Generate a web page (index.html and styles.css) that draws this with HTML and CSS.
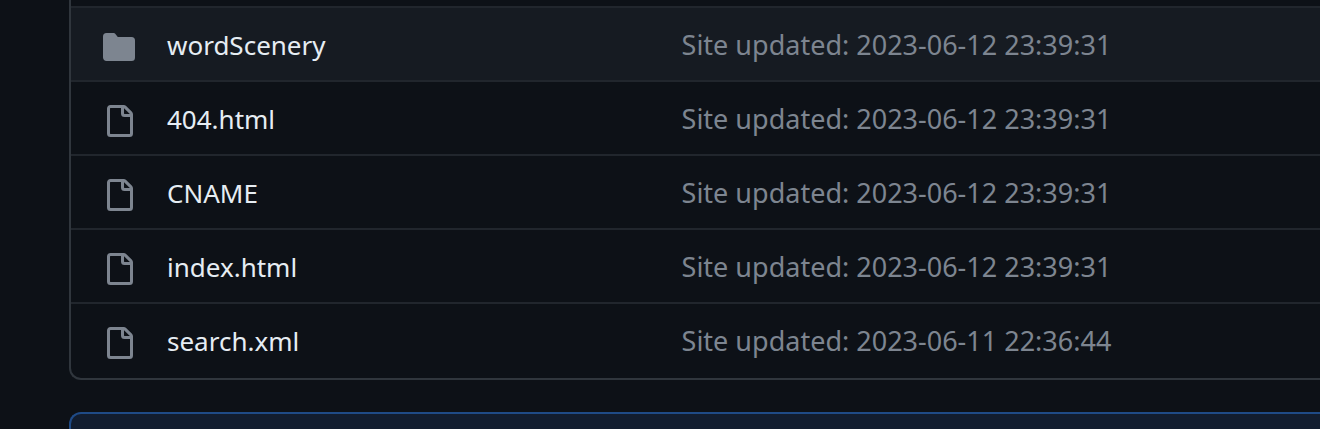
FILE: index.html
```html
<!DOCTYPE html>
<html lang="en">
<head>
  <meta charset="UTF-8" />
  <meta name="viewport" content="width=device-width, initial-scale=1" />
  <title>Files</title>
  <link rel="stylesheet" href="styles.css">
</head>
<body>

  <!-- Icons shared by the file rows -->
  <svg class="icon-defs" aria-hidden="true">
    <symbol id="icon-folder" viewBox="0 0 16 16">
      <path d="M1.75 1A1.75 1.75 0 0 0 0 2.75v10.5C0 14.216.784 15 1.75 15h12.5A1.75 1.75 0 0 0 16 13.25v-8.5A1.75 1.75 0 0 0 14.25 3H7.5a.25.25 0 0 1-.2-.1l-.9-1.2C6.07 1.26 5.55 1 5 1H1.75Z"/>
    </symbol>
    <symbol id="icon-file" viewBox="0 0 16 16">
      <path d="M2 1.75C2 .784 2.784 0 3.75 0h6.586c.464 0 .909.184 1.237.513l2.914 2.914c.329.328.513.773.513 1.237v9.586A1.75 1.75 0 0 1 13.25 16h-9.5A1.75 1.75 0 0 1 2 14.25Zm1.75-.25a.25.25 0 0 0-.25.25v12.5c0 .138.112.25.25.25h9.5a.25.25 0 0 0 .25-.25V6h-2.75A1.75 1.75 0 0 1 9 4.25V1.5Zm6.75.062V4.25c0 .138.112.25.25.25h2.688l-.011-.013-2.914-2.914-.013-.011Z"/>
    </symbol>
  </svg>

  <main class="file-box">
    <table class="file-table">
      <colgroup>
        <col class="col-icon">
        <col class="col-name">
        <col>
      </colgroup>
      <tbody>
        <tr class="active">
          <td class="icon-cell"><svg class="icon" aria-label="Directory"><use href="#icon-folder"/></svg></td>
          <td><a class="file-name" href="#">wordScenery</a></td>
          <td><a class="commit" href="#">Site updated: 2023-06-12 23:39:31</a></td>
        </tr>
        <tr>
          <td class="icon-cell"><svg class="icon" aria-label="File"><use href="#icon-file"/></svg></td>
          <td><a class="file-name" href="#">404.html</a></td>
          <td><a class="commit" href="#">Site updated: 2023-06-12 23:39:31</a></td>
        </tr>
        <tr>
          <td class="icon-cell"><svg class="icon" aria-label="File"><use href="#icon-file"/></svg></td>
          <td><a class="file-name" href="#">CNAME</a></td>
          <td><a class="commit" href="#">Site updated: 2023-06-12 23:39:31</a></td>
        </tr>
        <tr>
          <td class="icon-cell"><svg class="icon" aria-label="File"><use href="#icon-file"/></svg></td>
          <td><a class="file-name" href="#">index.html</a></td>
          <td><a class="commit" href="#">Site updated: 2023-06-12 23:39:31</a></td>
        </tr>
        <tr>
          <td class="icon-cell"><svg class="icon" aria-label="File"><use href="#icon-file"/></svg></td>
          <td><a class="file-name" href="#">search.xml</a></td>
          <td><a class="commit" href="#">Site updated: 2023-06-11 22:36:44</a></td>
        </tr>
      </tbody>
    </table>
  </main>

  <section class="notice"></section>

</body>
</html>
```
FILE: styles.css
```css
* {
  box-sizing: border-box;
}

body {
  display: flex;
  flex-direction: column;
  gap: 32px;
  min-height: 100vh;
  margin: 0;
  padding-left: 69px;
  background-color: #0d1117;
  color: #e6edf3;
  font-family: 'Segoe UI', 'Noto Sans', sans-serif;
  font-size: 26px;
  line-height: 36px;
}

a {
  color: inherit;
  text-decoration: none;
}

a:hover {
  text-decoration: underline;
}

.icon-defs {
  display: none;
}

/* File list, runs off the right edge */
.file-box {
  padding: 6px 0 2px;
  border: 2px solid #30363d;
  border-width: 0 0 2px 2px;
  border-bottom-left-radius: 12px;
}

.file-table {
  width: 100%;
  table-layout: fixed;
  border-collapse: separate;
  border-spacing: 0;
}

.col-icon {
  width: 96px;
}

.col-name {
  width: 41.2%;
}

.file-table td {
  height: 74px;
  padding: 2px 0 0;
  border-top: 2px solid #21262d;
  vertical-align: middle;
  white-space: nowrap;
}

.file-table .icon-cell {
  padding: 6px 0 0 32px;
}

.active {
  background-color: #161b22;
}

.icon {
  display: block;
  width: 32px;
  height: 32px;
  fill: #7d8590;
}

.commit {
  color: #7d8590;
  font-size: 27px;
}

.notice {
  flex: 1;
  border: 2px solid #1f4b87;
  border-width: 2px 0 0 2px;
  border-top-left-radius: 12px;
  background-color: #121d2f;
}
```
